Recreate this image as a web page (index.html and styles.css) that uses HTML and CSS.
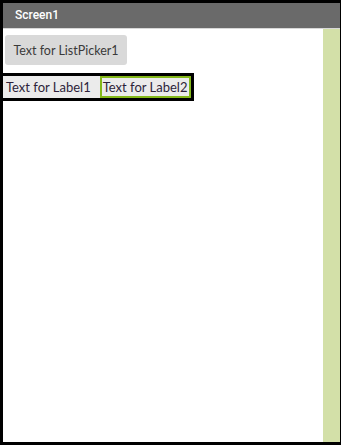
FILE: index.html
```html
<!DOCTYPE html>
<html lang="en">
<head>
    <meta charset="UTF-8">
    <meta name="viewport" content="width=device-width, initial-scale=1.0">
    <title>Screen1</title>
    <link rel="stylesheet" href="styles.css">
</head>
<body>

    <div class="phone">
        <div class="title-bar">Screen1</div>

        <div class="screen">
            <div class="content">
                <button type="button" class="list-picker">Text for ListPicker1</button>

                <div class="label-row">
                    <div class="label">Text for Label1</div>
                    <div class="label selected">Text for Label2</div>
                </div>
            </div>
            <div class="side-bar"></div>
        </div>
    </div>

</body>
</html>
```

FILE: styles.css
```css
html, body {
    margin: 0;
    padding: 0;
}

body {
    font-family: Lato, "Open Sans", sans-serif;
    background-color: #000;
}

.phone {
    width: 341px;
    height: 445px;
    box-sizing: border-box;
    border-style: solid;
    border-color: #000;
    border-width: 3px 1px 3px 3px;
    display: flex;
    flex-direction: column;
    background-color: #fff;
}

.title-bar {
    height: 25px;
    line-height: 25px;
    padding-left: 12px;
    background-color: #6a6a6a;
    border-bottom: 1px solid #d8d8d8;
    color: #fff;
    font-family: Roboto, sans-serif;
    font-weight: 500;
    font-size: 12px;
}

.screen {
    flex: 1;
    display: flex;
}

.content {
    flex: 1;
    padding: 6px 0 0 2px;
}

.side-bar {
    width: 17px;
    background-color: #d3e0a8;
}

.list-picker {
    display: block;
    width: 122px;
    height: 30px;
    padding: 0;
    border: none;
    border-radius: 3px;
    background-color: #d9d9d9;
    color: #3a3a3a;
    font-family: Lato, "Open Sans", sans-serif;
    font-size: 12.5px;
}

.label-row {
    display: inline-flex;
    margin: 8px 0 0 -2px;
    border: 3px solid #000;
    border-left: none;
}

.label {
    padding: 2px 9px 2px 3px;
    background-color: #ebebeb;
    color: #2d1f3a;
    font-size: 13px;
    line-height: 18px;
}

.label.selected {
    padding: 0 2px 0 1px;
    border: 2px solid #84b81a;
}
```
